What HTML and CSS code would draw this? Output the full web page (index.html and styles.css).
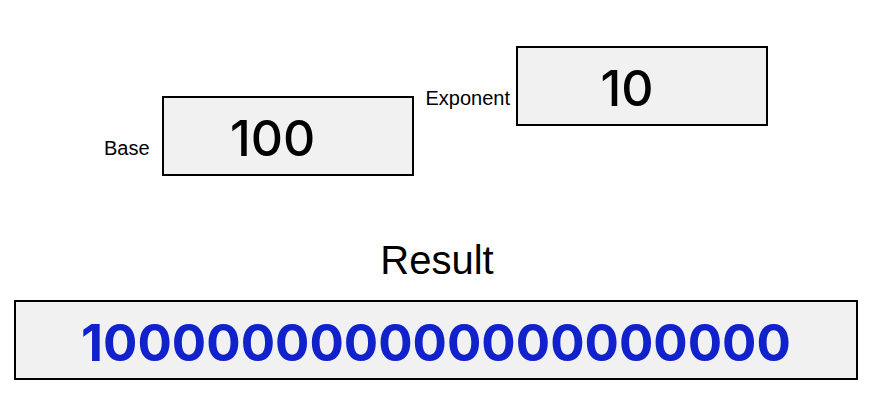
FILE: index.html
```html
<!DOCTYPE html>
<html lang="en">
<head>
<meta charset="utf-8">
<title>Exponent Calculator</title>
<link rel="stylesheet" href="styles.css">
</head>
<body>
<main class="calculator">
  <form class="inputs">
    <div class="field base">
      <label for="base">Base</label>
      <input id="base" class="box" type="text" inputmode="numeric" value="100">
    </div>
    <div class="field exponent">
      <label for="exponent">Exponent</label>
      <input id="exponent" class="box" type="text" inputmode="numeric" value="10">
    </div>
  </form>
  <section class="result">
    <label class="result-title" for="result">Result</label>
    <input id="result" class="box total" type="text" readonly value="100000000000000000000">
  </section>
</main>
</body>
</html>
```

FILE: styles.css
```css
* {
  box-sizing: border-box;
}

body {
  margin: 0;
  background: #fff;
  color: #000;
  font-family: "Liberation Sans", Arial, sans-serif;
}

.calculator {
  padding: 46px 12px 36px 14px;
}

.inputs {
  display: flex;
  justify-content: center;
  align-items: flex-start;
  gap: 12px;
}

.field {
  display: flex;
  align-items: center;
  gap: 12px;
  font-size: 20px;
  line-height: 24px;
}

.base {
  padding-top: 50px;
}

.exponent {
  gap: 6px;
}

.box {
  width: 252px;
  height: 80px;
  margin: 0;
  padding: 4px 30px 0 0;
  border: 2px solid #000;
  border-radius: 0;
  background: #f1f1f1;
  color: #000;
  font-family: Inter, sans-serif;
  font-size: 50px;
  font-weight: 500;
  text-align: center;
}

.field label {
  padding-top: 24px;
}

.result {
  display: flex;
  flex-direction: column;
  align-items: center;
  margin-top: 60px;
}

.result-title {
  padding-left: 2px;
  font-size: 40px;
  line-height: 48px;
}

.total {
  width: 100%;
  margin-top: 16px;
  padding-right: 0;
  color: #1122cc;
  font-size: 51px;
  font-weight: 700;
}
```
